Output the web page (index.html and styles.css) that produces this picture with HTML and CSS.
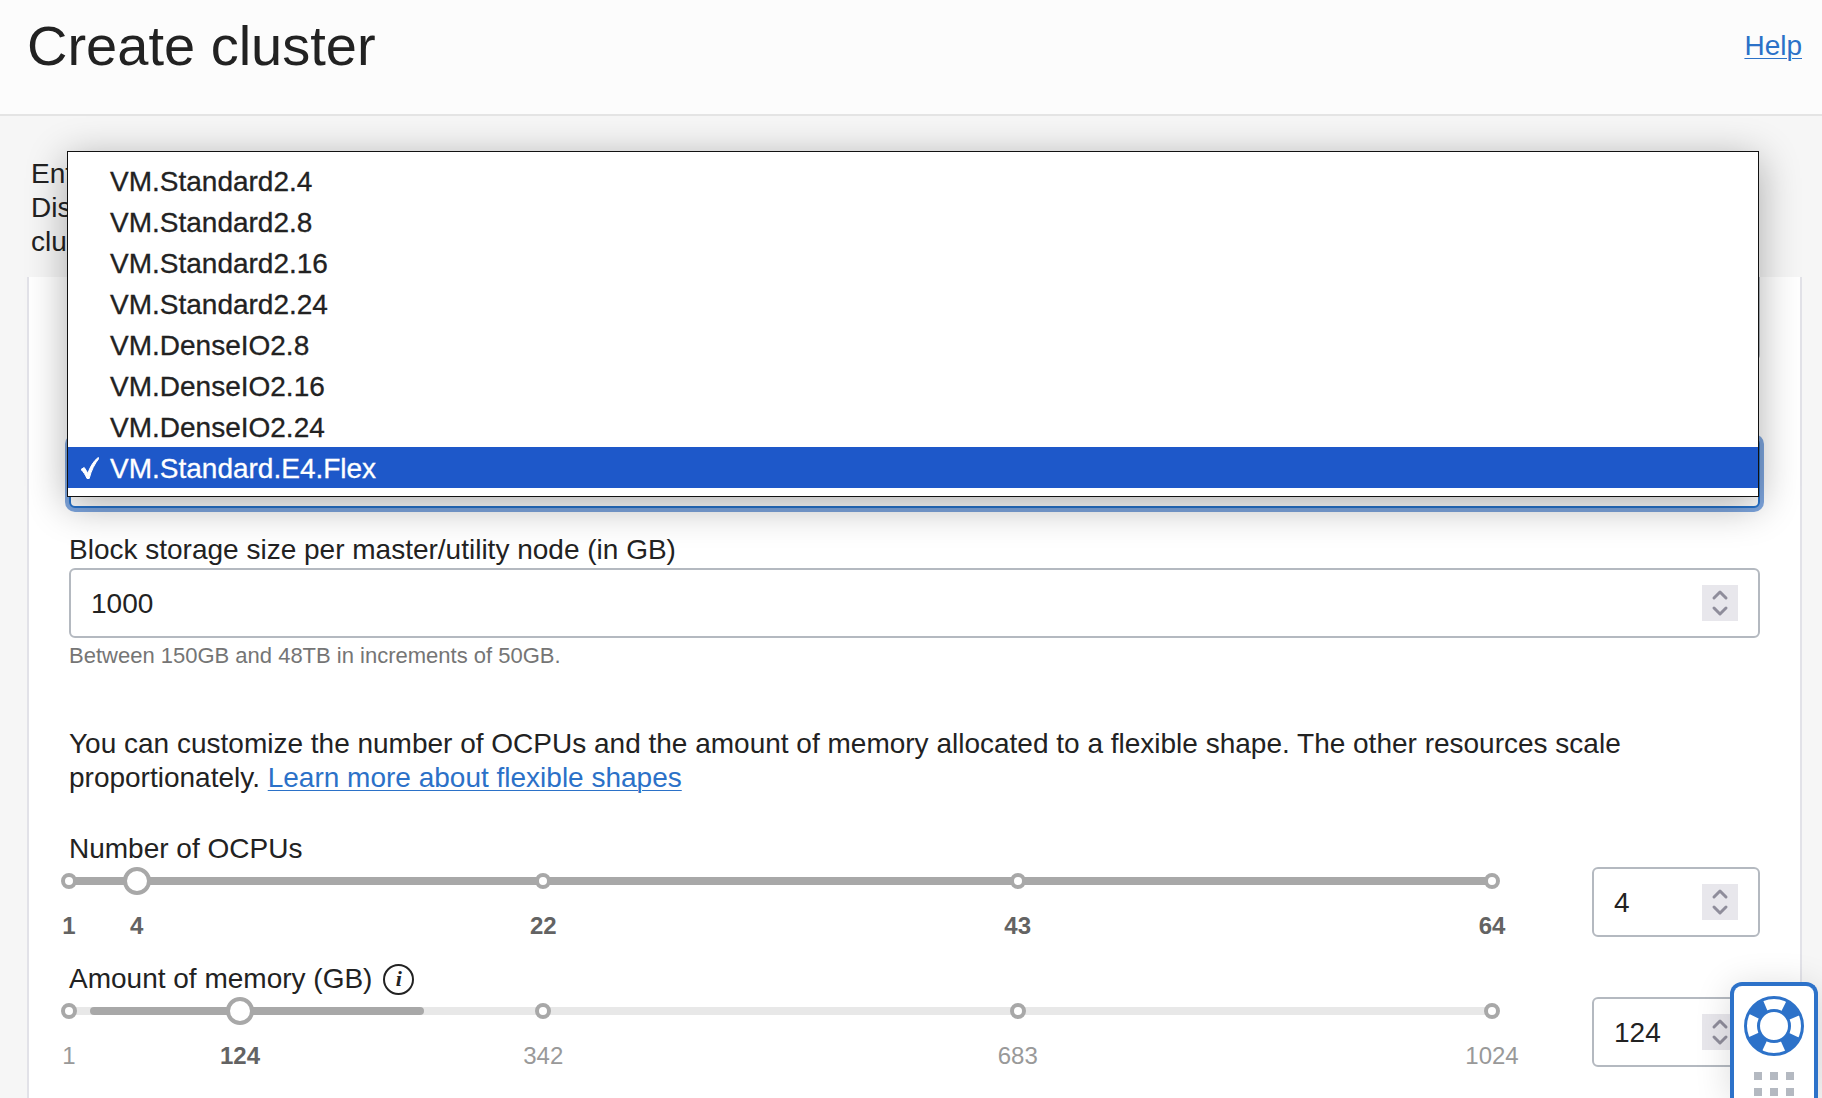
FILE: index.html
```html
<!DOCTYPE html>
<html lang="en">
<head>
  <meta charset="utf-8">
  <meta name="viewport" content="width=device-width, initial-scale=1">
  <title>Create cluster</title>
  <link rel="stylesheet" href="styles.css">
</head>
<body>
  <header class="header">
    <h1 class="title">Create cluster</h1>
    <a class="link" href="#help">Help</a>
  </header>

  <main class="main">
    <p class="intro">Ent<br>Dis<br>clu</p>

    <form class="panel">
      <div class="previous-field"></div>

      <div class="shape">
        <select class="shape-select" aria-label="Shape">
          <option>VM.Standard.E4.Flex</option>
        </select>
        <ul class="menu" role="listbox" aria-label="Shape options">
          <li class="option" role="option">VM.Standard2.4</li>
          <li class="option" role="option">VM.Standard2.8</li>
          <li class="option" role="option">VM.Standard2.16</li>
          <li class="option" role="option">VM.Standard2.24</li>
          <li class="option" role="option">VM.DenseIO2.8</li>
          <li class="option" role="option">VM.DenseIO2.16</li>
          <li class="option" role="option">VM.DenseIO2.24</li>
          <li class="option option-selected" role="option" aria-selected="true">
            <svg class="check" viewBox="0 0 18 22" aria-hidden="true"><path d="M0 12.500 L3.200 10.500 C4.800 12.500 5.800 14.500 6.800 16.600 C9 10 12.500 4 17.200 0.500 L18 1.200 C13.500 7 10.200 13.500 8.200 21.500 L6 21.500 C4.400 17.800 2.600 15 0 12.500 Z"/></svg>VM.Standard.E4.Flex</li>
        </ul>
      </div>

      <div class="storage">
        <label for="storage">Block storage size per master/utility node (in GB)</label>
        <div class="number">
          <input id="storage" type="number" value="1000" min="150" step="50">
          <svg class="spin" viewBox="0 0 36 36" aria-hidden="true"><path d="M12 13l6-6 6 6M12 23l6 6 6-6"/></svg>
        </div>
        <p class="hint">Between 150GB and 48TB in increments of 50GB.</p>
      </div>

      <p class="note">You can customize the number of OCPUs and the amount of memory allocated to a flexible shape. The other resources scale proportionately. <a class="link" href="#flexible">Learn more about flexible shapes</a></p>

      <div class="resource">
        <label class="resource-label" for="ocpus">Number of OCPUs</label>
        <div class="slider">
          <div class="track">
            <span class="range" style="left:0%;width:100%"></span>
            <span class="stop" style="left:0%"></span>
            <span class="stop" style="left:33.33%"></span>
            <span class="stop" style="left:66.67%"></span>
            <span class="stop" style="left:100%"></span>
            <input id="ocpus" class="thumb" type="range" min="1" max="64" value="4">
          </div>
          <div class="ticks">
            <span class="tick tick-strong" style="left:0%">1</span>
            <span class="tick tick-strong" style="left:4.76%">4</span>
            <span class="tick tick-strong" style="left:33.33%">22</span>
            <span class="tick tick-strong" style="left:66.67%">43</span>
            <span class="tick tick-strong" style="left:100%">64</span>
          </div>
        </div>
        <div class="number">
          <input type="number" value="4" min="1" max="64" aria-label="Number of OCPUs">
          <svg class="spin" viewBox="0 0 36 36" aria-hidden="true"><path d="M12 13l6-6 6 6M12 23l6 6 6-6"/></svg>
        </div>
      </div>

      <div class="resource">
        <div class="resource-label">
          <label for="memory">Amount of memory (GB)</label>
          <button class="info" type="button" aria-label="About memory">i</button>
        </div>
        <div class="slider">
          <div class="track">
            <span class="range" style="left:1.47%;width:23.46%"></span>
            <span class="stop" style="left:0%"></span>
            <span class="stop" style="left:33.33%"></span>
            <span class="stop" style="left:66.67%"></span>
            <span class="stop" style="left:100%"></span>
            <input id="memory" class="thumb" type="range" min="1" max="1024" value="124">
          </div>
          <div class="ticks">
            <span class="tick" style="left:0%">1</span>
            <span class="tick tick-strong" style="left:12.02%">124</span>
            <span class="tick" style="left:33.33%">342</span>
            <span class="tick" style="left:66.67%">683</span>
            <span class="tick" style="left:100%">1024</span>
          </div>
        </div>
        <div class="number">
          <input type="number" value="124" min="16" max="256" aria-label="Amount of memory in GB">
          <svg class="spin" viewBox="0 0 36 36" aria-hidden="true"><path d="M12 13l6-6 6 6M12 23l6 6 6-6"/></svg>
        </div>
      </div>
    </form>
  </main>

  <button class="support" type="button" aria-label="Support">
    <svg class="ring" viewBox="0 0 60 60" aria-hidden="true">
      <circle class="ring-band" cx="30" cy="30" r="22"/>
      <circle class="ring-line" cx="30" cy="30" r="28.500"/>
      <circle class="ring-line" cx="30" cy="30" r="15.500"/>
    </svg>
    <svg class="dots" viewBox="0 0 40 24" aria-hidden="true"><path d="M0 0h8v8H0zM16 0h8v8h-8zM32 0h8v8h-8zM0 16h8v8H0zM16 16h8v8h-8zM32 16h8v8h-8z"/></svg>
  </button>
</body>
</html>
```
FILE: styles.css
```css
* {
  box-sizing: border-box;
}

body {
  display: flex;
  flex-direction: column;
  height: 100vh;
  margin: 0;
  overflow: hidden;
  background: #f6f6f6;
  color: #222;
  font: 28px/34px "Liberation Sans", Arial, sans-serif;
}

p,
h1,
ul {
  margin: 0;
  padding: 0;
}

input,
select,
button {
  font: inherit;
  color: inherit;
}

.link {
  color: #2b71c8;
  text-decoration-thickness: 1px;
  text-underline-offset: 3px;
}

.header {
  display: flex;
  flex-shrink: 0;
  align-items: flex-start;
  justify-content: space-between;
  padding: 14px 20px 36px 27px;
  border-bottom: 2px solid #e4e4e4;
  background: #fcfcfc;
}

.header .link {
  margin-top: 15px;
}

.title {
  font-size: 56px;
  font-weight: 400;
  line-height: 64px;
}

.main {
  display: flex;
  flex: 1;
  flex-direction: column;
  padding: 41px 20px 0 27px;
}

.intro {
  padding: 0 4px 18px;
}

.panel {
  flex: 1;
  padding: 0 40px;
  border: solid #e2e2e8;
  border-width: 0 2px;
  background: #fff;
}

.previous-field {
  height: 84px;
  border: 2px solid #b4b9c0;
  border-top: 0;
  border-radius: 0 0 6px 6px;
}

.shape {
  position: relative;
  margin-top: 77px;
}

.shape-select {
  display: block;
  width: 100%;
  height: 70px;
  padding: 0 20px;
  border: 2px solid #2672cb;
  border-radius: 6px;
  outline: 0;
  background: #fff;
  box-shadow: 0 0 0 4px #7ea6df;
  appearance: none;
}

.menu {
  position: absolute;
  right: 1px;
  bottom: 11px;
  left: -2px;
  z-index: 1;
  padding: 9px 0 8px;
  border: 1px solid #111;
  background: #fff;
  box-shadow: 0 8px 38px rgba(0, 0, 0, 0.32);
  list-style: none;
}

.option {
  height: 41px;
  padding-left: 42px;
  line-height: 41px;
  -webkit-text-stroke: 0.3px;
}

.option-selected {
  display: flex;
  align-items: center;
  gap: 11px;
  height: 41px;
  margin-top: -1px;
  padding: 1px 0 0 13px;
  background: #1e58c9;
  color: #fff;
}

.check {
  width: 18px;
  height: 22px;
  fill: currentColor;
  stroke: currentColor;
  stroke-width: 1;
}

.storage {
  margin-top: 25px;
}

.storage label {
  display: block;
  margin-bottom: 1px;
}

.number {
  display: flex;
  align-items: center;
  height: 70px;
  padding: 0 20px;
  border: 2px solid #b4b9c0;
  border-radius: 6px;
  background: #fff;
}

.number input {
  flex: 1;
  min-width: 0;
  padding: 2px 0 0;
  border: 0;
  outline: 0;
  background: transparent;
  appearance: textfield;
}

.number input::-webkit-inner-spin-button {
  display: none;
}

.spin {
  width: 36px;
  height: 36px;
  background: #e8e7ec;
  fill: none;
  stroke: #8f8d9b;
  stroke-width: 3;
  stroke-linecap: round;
  stroke-linejoin: round;
}

.hint {
  margin-top: 5px;
  color: #757575;
  font-size: 22px;
  line-height: 26px;
}

.note {
  margin-top: 58px;
  margin-bottom: 37px;
}

.resource {
  display: grid;
  grid-template-columns: 1fr 168px;
  column-gap: 100px;
  margin-bottom: 22px;
}

.resource-label {
  display: flex;
  grid-column: 1 / -1;
  align-items: center;
  gap: 11px;
  height: 35px;
  padding-bottom: 1px;
}

.info {
  width: 31px;
  height: 31px;
  padding: 0;
  border: 2px solid #222;
  border-radius: 50%;
  background: none;
  font: italic 700 22px/26px "Liberation Serif", serif;
}

.track {
  position: relative;
  height: 28px;
  background: linear-gradient(#e8e8e8, #e8e8e8) center / 100% 8px no-repeat;
}

.range {
  position: absolute;
  top: 10px;
  height: 8px;
  border-radius: 4px;
  background: #a8a8a8;
}

.stop {
  position: absolute;
  top: 6px;
  width: 16px;
  height: 16px;
  margin-left: -8px;
  border: 4px solid #a8a8a8;
  border-radius: 50%;
  background: #fff;
}

.thumb {
  position: absolute;
  top: 0;
  left: -14px;
  width: calc(100% + 28px);
  height: 28px;
  margin: 0;
  background: transparent;
  appearance: none;
}

.thumb::-webkit-slider-thumb {
  width: 28px;
  height: 28px;
  border: 4px solid #a8a8a8;
  border-radius: 50%;
  background: #fff;
  appearance: none;
}

.ticks {
  position: relative;
  height: 28px;
  margin-top: 17px;
  color: #999;
  font-size: 24px;
  line-height: 28px;
}

.tick {
  position: absolute;
  transform: translateX(-50%);
}

.tick-strong {
  color: #636363;
  font-weight: 700;
}

.support {
  position: fixed;
  right: 4px;
  bottom: 0;
  z-index: 2;
  display: flex;
  flex-direction: column;
  align-items: center;
  gap: 16px;
  width: 88px;
  padding: 10px 0 2px;
  border: 4px solid #2d72c9;
  border-bottom: 0;
  border-radius: 12px 12px 0 0;
  background: #fff;
  box-shadow: 0 4px 36px rgba(0, 0, 0, 0.14);
}

.ring {
  width: 60px;
  height: 60px;
  fill: none;
  stroke: #2d72c9;
}

.ring-line {
  stroke-width: 3;
}

.ring-band {
  stroke-width: 14;
  stroke-dasharray: 15.500 19.060;
  stroke-dashoffset: 25.030;
}

.dots {
  width: 40px;
  height: 24px;
  fill: #b4b9c1;
}
```
